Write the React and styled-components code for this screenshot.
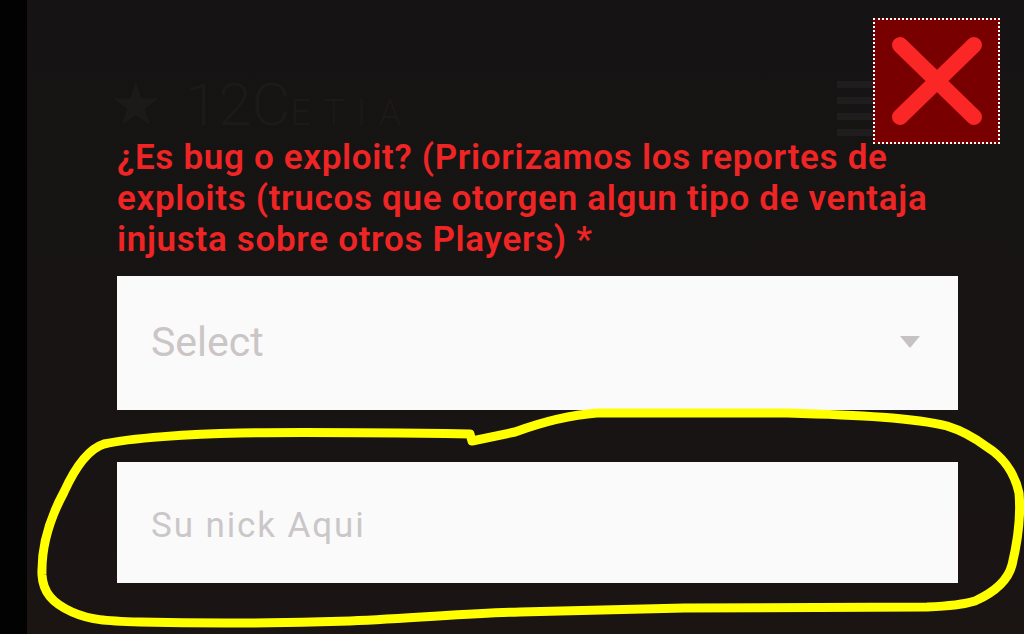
import React from "react";
import styled, { createGlobalStyle } from "styled-components";

const GlobalStyle = createGlobalStyle`
  html, body {
    margin: 0;
    padding: 0;
    background: #000;
  }
  * {
    box-sizing: border-box;
  }
`;

const Page = styled.div`
  position: relative;
  width: 1024px;
  height: 634px;
  overflow: hidden;
  display: flex;
  font-family: Roboto, "Liberation Sans", sans-serif;
`;

const Edge = styled.div`
  width: 27px;
  flex-shrink: 0;
  background: #020202;
`;

const Main = styled.main`
  position: relative;
  flex: 1;
  padding: 0 66px 0 90px;
  background: linear-gradient(#151313, #181414 60%, #1a1413);
`;

const Header = styled.header`
  height: 137px;
  padding-top: 74px;
  display: flex;
  justify-content: space-between;
  align-items: flex-start;
`;

const GhostLogo = styled.div`
  margin-left: -8px;
  font-size: 60px;
  line-height: 62px;
  font-weight: 300;
  color: #1c1919;
  white-space: nowrap;

  i {
    margin-right: 22px;
    font-style: normal;
  }

  small {
    font-size: 36px;
    letter-spacing: 12px;
  }
`;

const GhostMenu = styled.div`
  width: 36px;
  margin: 7px 85px 0 0;
  display: flex;
  flex-direction: column;
  gap: 9px;
`;

const GhostBar = styled.span`
  height: 7px;
  background: #1f1d1d;
`;

const Question = styled.label`
  display: block;
  width: 830px;
  margin-bottom: 16px;
  color: #ee2524;
  font-size: 35px;
  line-height: 41px;
  font-weight: 600;
  letter-spacing: 0.68px;
`;

const SelectBox = styled.div`
  height: 134px;
  margin-bottom: 52px;
  padding: 0 38px 2px 34px;
  display: flex;
  align-items: center;
  justify-content: space-between;
  background: #fafafa;
  color: #cbc5c6;
  font-size: 41px;
`;

const Caret = styled.span`
  width: 0;
  height: 0;
  border-left: 10px solid transparent;
  border-right: 10px solid transparent;
  border-top: 12px solid #c6c1c2;
`;

const NickInput = styled.input`
  display: block;
  width: 100%;
  height: 121px;
  padding: 5px 34px 0;
  border: 0;
  border-radius: 0;
  outline: 0;
  background: #fafafa;
  font-family: inherit;
  font-size: 35px;
  letter-spacing: 1.9px;

  &::placeholder {
    color: #cbc7c8;
    opacity: 1;
  }
`;

const CloseButton = styled.button`
  position: absolute;
  top: 18px;
  left: 873px;
  width: 127px;
  height: 126px;
  padding: 0;
  display: flex;
  align-items: center;
  justify-content: center;
  background: #790000;
  border: 2px dotted #fff;
`;

const Scribble = styled.svg`
  position: absolute;
  top: 0;
  left: 0;
  pointer-events: none;
`;

export default function App() {
  return (
    <Page>
      <GlobalStyle />
      <Edge />
      <Main>
        <Header>
          <GhostLogo>
            <i>★</i>12C<small>ETIA</small>
          </GhostLogo>
          <GhostMenu>
            <GhostBar />
            <GhostBar />
            <GhostBar />
            <GhostBar />
          </GhostMenu>
        </Header>
        <Question>
          ¿Es bug o exploit? (Priorizamos los reportes de exploits (trucos que
          otorgen algun tipo de ventaja injusta sobre otros Players) *
        </Question>
        <SelectBox>
          Select
          <Caret />
        </SelectBox>
        <NickInput placeholder="Su nick Aqui" />
      </Main>
      <CloseButton aria-label="Cerrar">
        <svg width="92" height="90" viewBox="0 0 92 90">
          <path
            d="M9 9 L83 81 M83 9 L9 81"
            stroke="#fb2626"
            strokeWidth="16"
            strokeLinecap="round"
            fill="none"
          />
        </svg>
      </CloseButton>
      <Scribble width="1024" height="634" viewBox="0 0 1024 634">
        <path
          d="M472 441 L470 434 C400 433 300 432 240 433 C190 434 130 438 104 444 C88 449 74 470 64 492 C50 518 41 545 42 575 C43 592 52 603 72 612 C90 620 105 621 140 622 C220 624 290 623 350 621 C420 618 470 613 520 612 L684 608 L927 607 C950 606 962 605 975 601 C995 592 1008 580 1012 565 C1018 540 1021 515 1019 493 C1014 470 1000 455 987 447 C975 438 960 430 947 426 C915 418 860 415 787 413 L597 413 C570 415 545 421 515 432 Z"
          fill="none"
          stroke="#ffff00"
          strokeWidth="9"
          strokeLinejoin="round"
        />
      </Scribble>
    </Page>
  );
}
